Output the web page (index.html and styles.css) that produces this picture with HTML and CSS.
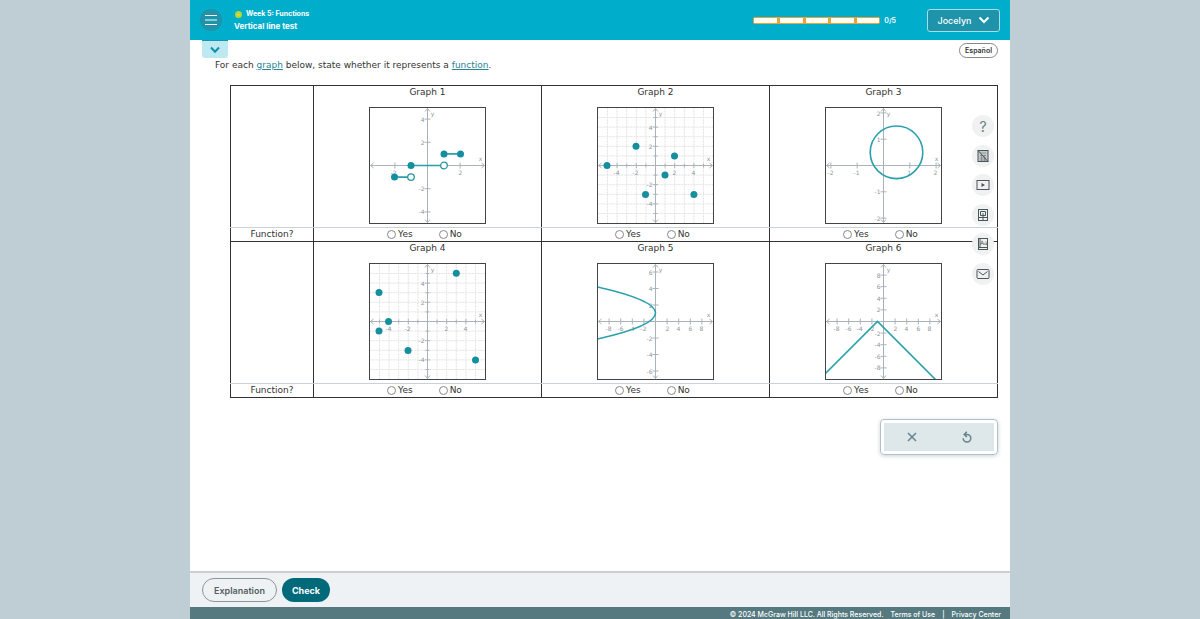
FILE: index.html
```html
<!DOCTYPE html>
<html lang="en">
<head>
<meta charset="utf-8">
<title>Vertical line test</title>
<link rel="stylesheet" href="styles.css">
</head>
<body>
<svg class="defs" aria-hidden="true">
  <defs>
    <g id="axes">
      <path d="M-57 0H57M0-57V57"/>
      <path d="M-54-2.5L-57 0L-54 2.5M54-2.5L57 0L54 2.5M-2.5-54L0-57L2.5-54M-2.5 54L0 57L2.5 54"/>
    </g>
    <path id="grid" d="M-48-58V58M-38.4-58V58M-28.8-58V58M-19.2-58V58M-9.6-58V58M9.6-58V58M19.2-58V58M28.8-58V58M38.4-58V58M48-58V58M-58-48H58M-58-38.4H58M-58-28.8H58M-58-19.2H58M-58-9.6H58M-58 9.6H58M-58 19.2H58M-58 28.8H58M-58 38.4H58M-58 48H58"/>
    <path id="unit-ticks" d="M-48-2V2M-38.4-2.5V2.5M-28.8-2V2M-19.2-2.5V2.5M-9.6-2V2M9.6-2V2M19.2-2.5V2.5M28.8-2V2M38.4-2.5V2.5M48-2V2M-2-48H2M-2.5-38.4H2.5M-2-28.8H2M-2.5-19.2H2.5M-2-9.6H2M-2 9.6H2M-2.5 19.2H2.5M-2 28.8H2M-2.5 38.4H2.5M-2 48H2"/>
  </defs>
</svg>
<div class="app">
  <header class="topbar">
    <button class="menu" type="button" aria-label="Menu">
      <svg viewBox="0 0 22 22"><path d="M5 6.5H17M5 11H17M5 15.5H17"/></svg>
    </button>
    <div class="titles">
      <div class="course"><span class="dot"></span>Week 5: Functions</div>
      <h1>Vertical line test</h1>
    </div>
    <div class="progress">
      <div class="bar"><i></i><i></i><i></i><i></i><i></i></div>
      <span>0/5</span>
    </div>
    <button class="user" type="button">Jocelyn
      <svg viewBox="0 0 12 8"><path d="M1.5 1.5L6 6L10.5 1.5"/></svg>
    </button>
  </header>

  <main>
    <div class="subbar">
      <button class="expand" type="button" aria-label="Expand">
        <svg viewBox="0 0 12 8"><path d="M2 1.5L6 5.8L10 1.5"/></svg>
      </button>
      <button class="lang" type="button">Español</button>
    </div>
    <p class="prompt">For each <a href="#graph">graph</a> below, state whether it represents a <a href="#function">function</a>.</p>

    <table>
      <colgroup><col class="label-col"><col><col><col></colgroup>
      <tbody>
      <tr class="graphs">
        <td></td>
        <td>
          <h2>Graph 1</h2>
          <svg class="plot" viewBox="-58.5 -58.5 117 117" role="img" aria-label="Graph 1">
            <g class="axis"><use href="#axes"/><path d="M-32.6-3V3M32.6-3V3M-3-46.4H3M-3-23.2H3M-3 23.2H3M-3 46.4H3"/></g>
            <g class="num"><text x="-34" y="9">-2</text><text x="33" y="9">2</text><text x="53" y="-5">x</text><text x="5" y="-50">y</text></g>
            <g class="num side"><text x="-3" y="-44">4</text><text x="-3" y="-21">2</text><text x="-3" y="25">-2</text><text x="-3" y="48">-4</text></g>
            <g class="curve"><path d="M-33 11.6H-16.5M-16.5 0H16.5M16.5-11.6H33"/></g>
            <g class="points"><circle cx="-33" cy="11.6" r="3.5"/><circle cx="-16.5" cy="0" r="3.5"/><circle cx="16.5" cy="-11.6" r="3.5"/><circle cx="33" cy="-11.6" r="3.5"/></g>
            <g class="open"><circle cx="-16.5" cy="11.6" r="3.3"/><circle cx="16.5" cy="0" r="3.3"/></g>
            <rect class="frame" x="-58" y="-58" width="116" height="116"/>
          </svg>
        </td>
        <td>
          <h2>Graph 2</h2>
          <svg class="plot" viewBox="-58.5 -58.5 117 117" role="img" aria-label="Graph 2">
            <g class="grid"><use href="#grid"/></g>
            <g class="axis"><use href="#axes"/><use href="#unit-ticks"/></g>
            <g class="num"><text x="-39" y="9">-4</text><text x="-20" y="9">-2</text><text x="19" y="9">2</text><text x="38" y="9">4</text><text x="53" y="-5">x</text><text x="5" y="-50">y</text></g>
            <g class="num side"><text x="-3" y="-36">4</text><text x="-3" y="-17">2</text><text x="-3" y="21">-2</text><text x="-3" y="40">-4</text></g>
            <g class="points"><circle cx="-48.5" cy="0" r="3.5"/><circle cx="-19.5" cy="-19.2" r="3.5"/><circle cx="19" cy="-9.6" r="3.5"/><circle cx="9.5" cy="9.6" r="3.5"/><circle cx="-10" cy="29" r="3.5"/><circle cx="38.4" cy="29" r="3.5"/></g>
            <rect class="frame" x="-58" y="-58" width="116" height="116"/>
          </svg>
        </td>
        <td>
          <h2>Graph 3</h2>
          <svg class="plot" viewBox="-58.5 -58.5 117 117" role="img" aria-label="Graph 3">
            <g class="axis"><use href="#axes"/><path d="M-52.6-3V3M-26.3-3V3M26.3-3V3M52.6-3V3M-3-52.6H3M-3-26.3H3M-3 26.3H3M-3 52.6H3"/></g>
            <g class="num"><text x="-53" y="9">-2</text><text x="-27" y="9">-1</text><text x="26" y="9">1</text><text x="52" y="9">2</text><text x="53" y="-5">x</text><text x="5" y="-50">y</text></g>
            <g class="num side"><text x="-3" y="-50">2</text><text x="-3" y="-24">1</text><text x="-3" y="28">-1</text><text x="-3" y="55">-2</text></g>
            <g class="curve"><circle cx="13" cy="-13.2" r="26.3"/></g>
            <rect class="frame" x="-58" y="-58" width="116" height="116"/>
          </svg>
        </td>
      </tr>
      <tr class="answers">
        <th scope="row">Function?</th>
        <td><div class="choices"><label><input type="radio" name="g1">Yes</label><label><input type="radio" name="g1">No</label></div></td>
        <td><div class="choices"><label><input type="radio" name="g2">Yes</label><label><input type="radio" name="g2">No</label></div></td>
        <td><div class="choices"><label><input type="radio" name="g3">Yes</label><label><input type="radio" name="g3">No</label></div></td>
      </tr>
      <tr class="graphs">
        <td></td>
        <td>
          <h2>Graph 4</h2>
          <svg class="plot" viewBox="-58.5 -58.5 117 117" role="img" aria-label="Graph 4">
            <g class="grid"><use href="#grid"/></g>
            <g class="axis"><use href="#axes"/><use href="#unit-ticks"/></g>
            <g class="num"><text x="-39" y="9">-4</text><text x="-20" y="9">-2</text><text x="19" y="9">2</text><text x="38" y="9">4</text><text x="53" y="-5">x</text><text x="5" y="-50">y</text></g>
            <g class="num side"><text x="-3" y="-36">4</text><text x="-3" y="-17">2</text><text x="-3" y="21">-2</text><text x="-3" y="40">-4</text></g>
            <g class="points"><circle cx="-48.5" cy="-29" r="3.5"/><circle cx="-39" cy="0" r="3.5"/><circle cx="-48.5" cy="9.6" r="3.5"/><circle cx="-19.5" cy="29" r="3.5"/><circle cx="28.8" cy="-48.3" r="3.5"/><circle cx="48" cy="38.6" r="3.5"/></g>
            <rect class="frame" x="-58" y="-58" width="116" height="116"/>
          </svg>
        </td>
        <td>
          <h2>Graph 5</h2>
          <svg class="plot" viewBox="-58.5 -58.5 117 117" role="img" aria-label="Graph 5">
            <g class="axis"><use href="#axes"/><path d="M-46.4-3V3M-34.8-3V3M-23.2-3V3M-11.6-3V3M11.6-3V3M23.2-3V3M34.8-3V3M46.4-3V3M-3-49.5H3M-3-33H3M-3-16.5H3M-3 16.5H3M-3 33H3M-3 49.5H3"/></g>
            <g class="num"><text x="-47" y="9">-8</text><text x="-35" y="9">-6</text><text x="-24" y="9">-4</text><text x="-12" y="9">-2</text><text x="12" y="9">2</text><text x="23" y="9">4</text><text x="35" y="9">6</text><text x="46" y="9">8</text><text x="53" y="-5">x</text><text x="5" y="-50">y</text></g>
            <g class="num side"><text x="-3" y="-47">6</text><text x="-3" y="-31">4</text><text x="-3" y="-14">2</text><text x="-3" y="19">-2</text><text x="-3" y="35">-4</text><text x="-3" y="52">-6</text></g>
            <g class="curve"><path d="M-58-34.5Q58-8.5-58 17.5"/></g>
            <rect class="frame" x="-58" y="-58" width="116" height="116"/>
          </svg>
        </td>
        <td>
          <h2>Graph 6</h2>
          <svg class="plot" viewBox="-58.5 -58.5 117 117" role="img" aria-label="Graph 6">
            <g class="axis"><use href="#axes"/><path d="M-46.4-3V3M-34.8-3V3M-23.2-3V3M-11.6-3V3M11.6-3V3M23.2-3V3M34.8-3V3M46.4-3V3M-3-46.4H3M-3-34.8H3M-3-23.2H3M-3-11.6H3M-3 11.6H3M-3 23.2H3M-3 34.8H3M-3 46.4H3"/></g>
            <g class="num"><text x="-47" y="9">-8</text><text x="-35" y="9">-6</text><text x="-24" y="9">-4</text><text x="-12" y="9">-2</text><text x="12" y="9">2</text><text x="23" y="9">4</text><text x="35" y="9">6</text><text x="46" y="9">8</text><text x="53" y="-5">x</text><text x="5" y="-50">y</text></g>
            <g class="num side"><text x="-3" y="-44">8</text><text x="-3" y="-33">6</text><text x="-3" y="-21">4</text><text x="-3" y="-10">2</text><text x="-3" y="14">-2</text><text x="-3" y="25">-4</text><text x="-3" y="37">-6</text><text x="-3" y="48">-8</text></g>
            <g class="curve"><path d="M-58 52L-6 0L52 58"/></g>
            <rect class="frame" x="-58" y="-58" width="116" height="116"/>
          </svg>
        </td>
      </tr>
      <tr class="answers">
        <th scope="row">Function?</th>
        <td><div class="choices"><label><input type="radio" name="g4">Yes</label><label><input type="radio" name="g4">No</label></div></td>
        <td><div class="choices"><label><input type="radio" name="g5">Yes</label><label><input type="radio" name="g5">No</label></div></td>
        <td><div class="choices"><label><input type="radio" name="g6">Yes</label><label><input type="radio" name="g6">No</label></div></td>
      </tr>
      </tbody>
    </table>

    <div class="palette">
      <button type="button" aria-label="Clear"><svg viewBox="0 0 12 12"><path d="M2 2L10 10M10 2L2 10"/></svg></button>
      <button type="button" aria-label="Reset"><svg viewBox="0 0 12 12"><path d="M2.2 7.2A3.8 3.8 0 1 0 6 3.4H3.5M5.8.8L3.2 3.4L5.8 6"/></svg></button>
    </div>

    <nav class="tools" aria-label="Tools">
      <button class="help" type="button" aria-label="Help">?</button>
      <button type="button" aria-label="Calculator unavailable"><svg viewBox="0 0 14 14"><rect class="shade" x="2" y="1.5" width="10" height="11"/><path d="M4 4H10M4 6.5H10M4 9H10M4 11H10M5.5 6V12M8.5 6V12" opacity=".4"/><path d="M2 1.5L12 12.5"/></svg></button>
      <button type="button" aria-label="Video"><svg viewBox="0 0 14 14"><rect x="1" y="2.5" width="12" height="9"/><path class="solid" d="M5.5 5L9 7L5.5 9Z"/></svg></button>
      <button type="button" aria-label="Textbook"><svg viewBox="0 0 14 14"><rect x="2.5" y="1.5" width="9" height="11"/><path d="M4.5 3.5H9.5V7.5H4.5ZM7 5V12.5M2.5 9.5H11.5"/></svg></button>
      <button type="button" aria-label="Dictionary"><svg viewBox="0 0 14 14"><rect x="2.5" y="1.5" width="9" height="11"/><path d="M4 1.5V10.5M2.5 10.5H11.5"/><text x="4" y="8">Aa</text></svg></button>
      <button type="button" aria-label="Message"><svg viewBox="0 0 14 14"><rect x="1" y="2.5" width="12" height="9" rx="1"/><path d="M2.5 4.5L7 8L11.5 4.5"/></svg></button>
    </nav>
  </main>

  <div class="actions">
    <button class="explain" type="button">Explanation</button>
    <button class="check" type="button">Check</button>
  </div>
  <footer>
    <span>© 2024 McGraw Hill LLC. All Rights Reserved.</span>
    <a href="#terms">Terms of Use</a>
    <span>|</span>
    <a href="#privacy">Privacy Center</a>
  </footer>
</div>
</body>
</html>
```
FILE: styles.css
```css
* { box-sizing: border-box; }
body {
  margin: 0;
  background: #bfcdd4;
  color: #333;
  font-family: "DejaVu Sans", Verdana, sans-serif;
  font-size: 9px;
}
button { margin: 0; padding: 0; border: 0; font: inherit; color: inherit; background: none; cursor: pointer; }
svg { display: block; fill: none; stroke: currentColor; }
.defs { position: absolute; width: 0; height: 0; }
.app {
  display: flex;
  flex-direction: column;
  max-width: 820px;
  min-height: 100vh;
  margin: 0 auto;
  background: #fff;
}

.topbar {
  display: flex;
  align-items: center;
  height: 40px;
  padding: 0 10px;
  background: #00adca;
  color: #fff;
  font-family: Inter, sans-serif;
}
.menu { width: 22px; height: 22px; border-radius: 50%; background: #1f93a9; }
.menu svg { width: 22px; height: 22px; }
.titles { flex: 1; padding-top: 1px; padding-left: 12px; }
.course { display: flex; align-items: center; gap: 4px; padding-left: 1px; font-size: 7px; font-weight: 700; line-height: 12px; }
.dot { width: 7px; height: 7px; border: 2px solid #a5dc3c; border-radius: 50%; background: #ffc928; }
h1 { margin: 0; font-size: 8px; font-weight: 700; line-height: 13px; }
.progress { display: flex; align-items: center; gap: 4px; margin-right: 31px; font-size: 7px; font-weight: 600; }
.bar { display: flex; gap: 3px; width: 127px; height: 7px; padding: 1px; border-radius: 2px; background: #e8a33b; }
.bar i { flex: 1; background: #fffdf2; }
.user {
  display: flex;
  align-items: center;
  justify-content: center;
  gap: 6px;
  width: 73px;
  height: 23px;
  border: 1px solid #a5e0ea;
  border-radius: 3px;
  background: #1f93a9;
  font-size: 9px;
  font-weight: 500;
}
.user svg { width: 12px; height: 8px; stroke-width: 2; }

main { position: relative; flex: 1; padding: 0 12px; }
.subbar { display: flex; justify-content: space-between; align-items: flex-start; }
.expand { display: grid; place-items: center; width: 26px; height: 18px; border-top: 1px solid #1f93a9; border-radius: 0 0 3px 3px; background: #bdeaf2; color: #1290a5; }
.expand svg { width: 12px; height: 8px; stroke-width: 2; }
.lang { height: 15px; margin-top: 3px; padding: 0 5px; border: 1px solid #888; border-radius: 8px; font: 600 7px Inter, sans-serif; }
.prompt { margin: 0 0 0 13px; line-height: 14px; }
.prompt a { color: #2a8397; }

table {
  width: calc(100% - 28px);
  margin: 13px 0 0 28px;
  border-collapse: collapse;
  table-layout: fixed;
}
.label-col { width: 83px; }
td, th { padding: 0; border: 1px solid #333; font-weight: 400; }
.graphs td { height: 142px; padding-bottom: 3px; border-bottom-color: #c9d3d6; vertical-align: top; }
.answers td, .answers th { height: 14px; border-top-color: #c9d3d6; }
h2 { margin: 0 0 8px; font-size: 9px; font-weight: 400; line-height: 13px; text-align: center; }
.plot { width: 117px; height: 117px; margin: 0 auto; }
.frame { stroke: #444; }
.grid { stroke: #e2e2e2; stroke-dasharray: 2 1; }
.axis { stroke: #a9b3b9; }
.num { fill: #8d959a; stroke: none; font-size: 6px; text-anchor: middle; }
.side { text-anchor: end; }
.curve { stroke: #2aa0ac; stroke-width: 1.6; }
.points { fill: #158f9e; stroke: none; }
.open { fill: #fff; stroke: #2a93a0; stroke-width: 1.3; }
.answers th { line-height: 13px; }
.choices { display: flex; justify-content: center; gap: 26px; padding-right: 6px; }
.choices label { display: flex; align-items: center; gap: 2px; line-height: 13px; }
input { width: 9px; height: 9px; margin: 0; border: 1px solid #888; border-radius: 50%; background: #fff; appearance: none; }
input:checked { background: #158f9e; }

.palette {
  display: flex;
  width: 118px;
  height: 36px;
  margin: 21px 0 0 auto;
  padding: 3px;
  border: 1px solid #b0c2c7;
  border-radius: 4px;
  box-shadow: 0 1px 4px #c8d3d6;
}
.palette button { display: grid; flex: 1; place-items: center; background: #dee7e9; color: #63858c; }
.palette svg { width: 12px; height: 12px; stroke-width: 1.5; }

.tools {
  position: absolute;
  top: 75px;
  right: 16px;
  display: flex;
  flex-direction: column;
  justify-content: space-between;
  height: 170px;
}
.tools button { display: grid; place-items: center; width: 22px; height: 22px; border-radius: 50%; background: #f0f1f1; color: #4a5659; }
.tools svg { width: 14px; height: 14px; }
.tools text { fill: currentColor; stroke: none; font-size: 6px; }
.tools .shade { fill: #c3c8ca; }
.tools .solid { fill: currentColor; stroke: none; }
.tools .help { color: #6a7f85; font: 14px Inter, sans-serif; }

.actions {
  display: flex;
  align-items: center;
  gap: 5px;
  padding: 5px 12px;
  border-top: 2px solid #c8d0d4;
  background: #eef2f4;
  font-family: Inter, sans-serif;
  font-weight: 600;
}
.actions button { height: 24px; border-radius: 12px; }
.explain { width: 75px; border: 1px solid #8b9698; color: #555f62; }
.check { width: 48px; background: #00697a; color: #fff; font-weight: 700; }
footer {
  display: flex;
  align-items: center;
  justify-content: flex-end;
  gap: 7px;
  height: 12px;
  padding: 2px 9px 0;
  background: #55797f;
  color: #fff;
  font: 500 7px Inter, sans-serif;
}
footer a { color: inherit; text-decoration: none; }
```
